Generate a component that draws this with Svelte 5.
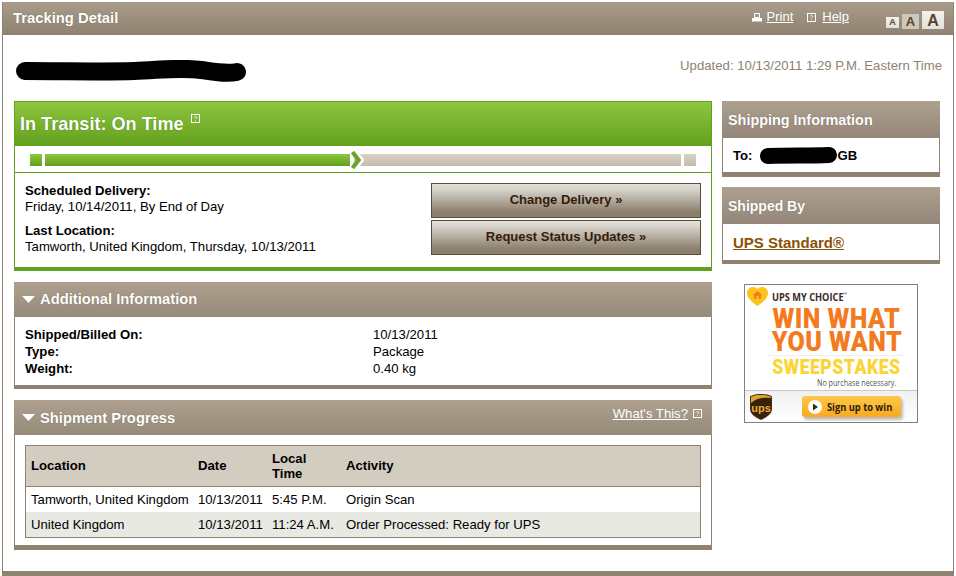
<script>
  const additional = [
    ['Shipped/Billed On:', '10/13/2011'],
    ['Type:', 'Package'],
    ['Weight:', '0.40 kg']
  ];
  const progress = [
    ['Tamworth, United Kingdom', '10/13/2011', '5:45 P.M.', 'Origin Scan'],
    ['United Kingdom', '10/13/2011', '11:24 A.M.', 'Order Processed: Ready for UPS']
  ];
</script>

{#snippet help()}
  <svg class="help" width="9" height="9" viewBox="0 0 9 9"><rect x=".5" y=".5" width="8" height="8" fill="none" stroke="currentColor"/><path d="M3.200 3.400c0-1 2.600-1.200 2.600.1 0 .8-1.300.8-1.300 1.600M4.500 6v.9" fill="none" stroke="currentColor" stroke-width=".8"/></svg>
{/snippet}

{#snippet arrow()}
  <svg class="tri" width="13" height="7" viewBox="0 0 13 7"><path d="M0 0h13L6.500 7z" fill="#fff"/></svg>
{/snippet}

<div class="page">
  <header class="top">
    <h1>Tracking Detail</h1>
    <div class="tools">
      <svg class="printer" width="10" height="9" viewBox="0 0 10 9"><path d="M2.500 .5h5v4h-5z" fill="#a89b89" stroke="#fff"/><path d="M0 5h10v3.500H0z" fill="#fff"/></svg>
      <a class="tool" href="#p">Print</a>
      <span class="helpwrap">{@render help()}</span>
      <a class="tool" href="#h">Help</a>
      <div class="sizes">
        <span class="s1">A</span><span class="s2">A</span><span class="s3">A</span>
      </div>
    </div>
  </header>

  <div class="intro">
    <svg class="scribble" width="230" height="24" viewBox="0 0 230 24"><path d="M9 11 C50 11 90 12 118 11 C145 10 165 7 185 10 C200 12 210 14 221 12" fill="none" stroke="#000" stroke-width="18" stroke-linecap="round"/></svg>
    <p class="updated">Updated: 10/13/2011 1:29 P.M. Eastern Time</p>
  </div>

  <div class="columns">
    <main class="left">
      <section class="status">
        <div class="status-head"><h2>In Transit: On Time</h2><span class="status-help">{@render help()}</span></div>
        <div class="track">
          <span class="seg green g1"></span>
          <span class="seg green g2"></span>
          <svg class="chev" width="14" height="18" viewBox="0 0 14 18"><path d="M6.500 .8 13 9l-6.500 8.200" fill="none" stroke="#fff" stroke-width="2.400"/><path d="M2.500 1 8.500 9l-6 8" fill="none" stroke="#6aa526" stroke-width="4"/></svg>
          <span class="seg tan t1"></span>
          <span class="seg tan t2"></span>
        </div>
        <div class="status-body">
          <div class="facts">
            <h3>Scheduled Delivery:</h3>
            <p>Friday, 10/14/2011, By End of Day</p>
            <h3 class="second">Last Location:</h3>
            <p>Tamworth, United Kingdom, Thursday, 10/13/2011</p>
          </div>
          <div class="actions">
            <button>Change Delivery »</button>
            <button>Request Status Updates »</button>
          </div>
        </div>
      </section>

      <section class="panel add">
        <div class="bar">{@render arrow()}<h2>Additional Information</h2></div>
        <dl>
          {#each additional as [k, v]}
            <dt>{k}</dt><dd>{v}</dd>
          {/each}
        </dl>
      </section>

      <section class="panel ship">
        <div class="bar">{@render arrow()}<h2>Shipment Progress</h2>
          <span class="whats"><a href="#w">What's This?</a>{@render help()}</span>
        </div>
        <div class="table-wrap">
          <table>
            <thead>
              <tr><th class="c1">Location</th><th class="c2">Date</th><th class="c3">Local<br />Time</th><th>Activity</th></tr>
            </thead>
            <tbody>
              {#each progress as row}
                <tr>{#each row as cell}<td>{cell}</td>{/each}</tr>
              {/each}
            </tbody>
          </table>
        </div>
      </section>
    </main>

    <aside class="right">
      <section class="side first">
        <h2>Shipping Information</h2>
        <div class="side-body to">
          <b>To:</b>
          <svg class="blot" width="79" height="19" viewBox="0 0 79 19"><path d="M9 10C30 9 50 10 70 9" fill="none" stroke="#000" stroke-width="16" stroke-linecap="round"/></svg>
          <b>GB</b>
        </div>
      </section>
      <section class="side second-box">
        <h2>Shipped By</h2>
        <div class="side-body by"><a href="#u">UPS Standard®</a></div>
      </section>

      <div class="ad">
        <div class="ad-top">
          <svg class="heart" width="21" height="19" viewBox="0 0 21 19"><path d="M10.500 19C5 15 0 11.500 0 6 0 2.500 2.700 0 6 0c1.900 0 3.500.9 4.500 2.300C11.500.9 13.100 0 15 0c3.300 0 6 2.500 6 6 0 5.500-5 9-10.500 13z" fill="#fcc419"/><path d="M10.500 4 6 8h1v4h7V8h1z" fill="#f47a20"/><path d="M9.300 9h2.400v3H9.300z" fill="#fcc419"/></svg>
          <span>UPS MY CHOICE<sup>℠</sup></span>
        </div>
        <div class="win"><span>WIN WHAT</span></div>
        <div class="win two"><span>YOU WANT</span></div>
        <div class="sweep"><span>SWEEPSTAKES</span></div>
        <div class="nopurchase"><span>No purchase necessary.</span></div>
        <div class="ad-foot">
          <svg class="shield" width="22" height="26" viewBox="0 0 22 26"><path d="M11 0C7 0 3 .6 0 2.300V15c0 5 5.500 8.500 11 11 5.500-2.500 11-6 11-11V2.300C19 .6 15 0 11 0z" fill="#4a2d0c"/><path d="M21 3.500C14 2.500 6 4 1 8.500V15c0 4.500 5 7.500 10 10 5-2.500 10-5.500 10-10z" fill="#3a2208"/><path d="M1 2.800C4 1.300 7.500 1 11 1s7 .3 10 1.800v1.200C14 3 6 4.500 1 9z" fill="#d9a437"/><text x="11" y="18" text-anchor="middle" class="ups">ups</text></svg>
          <div class="cta">
            <svg width="14" height="14" viewBox="0 0 14 14"><circle cx="7" cy="7" r="7" fill="#fff"/><path d="M5 3.500 10 7l-5 3.500z" fill="#3a2a10"/></svg>
            <span>Sign up to win</span>
          </div>
        </div>
      </div>
    </aside>
  </div>

  <div class="foot"></div>
</div>

<style>
  :global(body) { margin: 0; background: #fff; }
  .page {
    height: 574px;
    box-sizing: border-box;
    width: 952px;
    margin: 2px 0 0 2px;
    border-left: 1px solid #8f8270;
    border-right: 1px solid #8f8270;
    display: flex;
    flex-direction: column;
    font: 13.15px/17px "Liberation Sans", Arial, sans-serif;
    color: #000;
    overflow: hidden;
  }
  h1, h2, h3, p, dl, dd { margin: 0; }

  .top {
    height: 33px;
    flex: none;
    margin: 0 -1px;
    background: linear-gradient(#a99c8a, #8f8270);
    display: flex;
    align-items: center;
    justify-content: space-between;
    padding: 0 10px 0 11px;
    color: #fff;
  }
  h1 { font-size: 14.8px; font-weight: bold; text-shadow: 0 0 1px #6b6050; }
  .tools { display: flex; align-items: center; color: #fff; }
  .printer { margin-right: 5px; margin-top: -3px; }
  .tool { color: #fff; font-size: 13px; margin-top: -4px; }
  .helpwrap { display: flex; margin: -3px 6px 0 14px; }
  .help { display: block; flex: none; }
  .sizes { display: flex; align-items: flex-end; margin: 0 0 -3px 37px; gap: 3px; }
  .sizes span {
    background: linear-gradient(#f3f2ed, #e3e0d8);
    color: #54442e;
    font-weight: bold;
    display: flex;
    align-items: center;
    justify-content: center;
  }
  .s1 { width: 13px; height: 11px; font-size: 9px; margin-bottom: 1px; }
  .s2 { width: 17px; height: 15px; font-size: 13px; background: #cfc7ba !important; }
  .s3 { width: 22px; height: 18px; font-size: 16px; }

  .intro {
    height: 66px;
    flex: none;
    display: flex;
    justify-content: space-between;
    padding: 0 11px 0 13px;
  }
  .scribble { margin-top: 25px; }
  .updated { color: #8f8270; margin-top: 22px; font-size: 13.2px; }

  .columns { display: flex; flex: 1; padding-left: 11px; gap: 10px; }
  .left { width: 698px; flex: none; }
  .right { width: 218px; flex: none; }

  .status {
    box-sizing: border-box;
    height: 170px;
    border: 1px solid #63a01f;
    border-bottom: 4px solid #63a01f;
  }
  .status-head {
    height: 44px;
    background: linear-gradient(#8dc63f, #62a01e);
    display: flex;
    padding-left: 5px;
    box-sizing: border-box;
    color: #fff;
  }
  .status-head h2 { font-size: 18.1px; line-height: 44px; font-weight: bold; text-shadow: 0 0 1px #44700f; }
  .status-help { margin: 12px 0 0 7px; }
  .track {
    height: 27px;
    box-sizing: border-box;
    border-bottom: 1px solid #63a01f;
    padding: 8px 15px 0 15px;
    display: flex;
    align-items: flex-start;
  }
  .seg { height: 12px; display: block; }
  .green { background: linear-gradient(#8dc63f, #62a01e); }
  .tan { background: linear-gradient(#d8d1c6, #c5bcad); }
  .g1 { width: 12px; margin-right: 3px; }
  .g2 { width: 305px; }
  .chev { margin: -3px -10px 0 0; flex: none; position: relative; z-index: 1; }
  .t1 { width: 327px; }
  .t2 { width: 12px; margin-left: 3px; }
  .status-body { display: flex; justify-content: space-between; padding: 10px 10px 0 10px; }
  .facts h3 { font-size: 13.15px; font-weight: bold; line-height: 16px; }
  .facts p { line-height: 16px; }
  .facts .second { margin-top: 8px; }
  .actions { display: flex; flex-direction: column; gap: 2px; }
  button {
    width: 270px;
    height: 35px;
    padding: 0 0 2px;
    border: 1px solid #5c4d38;
    background: linear-gradient(#e2e0da 0, #d8d5cd 15%, #8c7f6d 85%, #8c7f6d 100%);
    color: #351c0a;
    font: bold 13px "Liberation Sans", Arial, sans-serif;
  }

  .panel {
    margin-top: 11px;
    box-sizing: border-box;
    border: 1px solid #8f8270;
    border-top: 0;
    border-bottom: 4px solid #8f8270;
  }
  .add { height: 107px; }
  .ship { height: 150px; border-bottom-width: 5px; }
  .bar {
    height: 35px;
    margin: 0 -1px;
    background: linear-gradient(#ada08e, #968a78);
    display: flex;
    align-items: center;
    padding: 0 10px 0 8px;
    color: #fff;
  }
  .tri { margin-right: 5px; }
  .bar h2 { font-size: 14.75px; font-weight: bold; text-shadow: 0 0 1px #6b6050; flex: 1; }
  .ship .bar h2 { padding-top: 2px; }
  .whats { display: flex; align-items: center; gap: 5px; margin-top: -9px; }
  .whats a { color: #fff; }
  dl {
    display: grid;
    grid-template-columns: 348px 1fr;
    padding: 9px 10px 0;
    line-height: 17px;
  }
  dt { font-weight: bold; }

  .table-wrap { padding: 10px 10px 0; }
  table {
    width: 100%;
    border-collapse: collapse;
    border: 1px solid #8f8270;
    table-layout: fixed;
  }
  th {
    background: #d3ccc0;
    border-bottom: 1px solid #8f8270;
    text-align: left;
    padding: 0 5px 1px;
    height: 39px;
    box-sizing: content-box;
    font-size: 13.15px;
    line-height: 15px;
  }
  td { padding: 0 5px 1px; height: 24px; box-sizing: content-box; white-space: nowrap; }
  .c1 { width: 157px; }
  .c2 { width: 64px; }
  .c3 { width: 64px; }
  tbody tr:nth-child(2) td { background: #e9e9e3; }

  .side {
    box-sizing: border-box;
    margin-top: 10px;
    border: 1px solid #8f8270;
    border-top: 0;
    border-bottom: 5px solid #8f8270;
    height: 77px;
  }
  .side.first { margin-top: 0; height: 76px; }
  .second-box { border-bottom-width: 4px; }
  .side h2 {
    height: 37px;
    line-height: 39px;
    margin: 0 -1px;
    padding-left: 6px;
    background: linear-gradient(#ada08e, #94877a);
    color: #fff;
    font-size: 14px;
    font-weight: bold;
    text-shadow: 0 0 1px #6b6050;
  }
  .first h2 { font-size: 14.4px; }
  .side-body { box-sizing: border-box; height: 34px; display: flex; align-items: center; padding-left: 10px; }
  .to b { font-size: 13.15px; }
  .blot { margin: 0 -1px 0 7px; }
  .by { padding-top: 2px; }
  .by a { color: #8a5208; font-size: 15px; font-weight: bold; }

  .ad {
    box-sizing: border-box;
    width: 174px;
    height: 139px;
    margin: 20px 0 0 22px;
    border: 1px solid #808080;
    display: flex;
    flex-direction: column;
    font-family: "Noto Sans", sans-serif;
    overflow: hidden;
  }
  .ad-top { height: 22px; flex: none; display: flex; align-items: flex-start; padding: 2px 0 0 2px; box-sizing: border-box; gap: 4px; }
  .heart { flex: none; }
  .ad-top span { font: bold 11px/14px "Open Sans", sans-serif; color: #3a2a1e; transform: scaleX(.84); transform-origin: left; white-space: nowrap; margin-top: 3px; }
  .ad-top sup { font-size: 5px; vertical-align: 5px; line-height: 0; }
  .win { height: 24px; flex: none; display: flex; justify-content: center; overflow: visible; padding-left: 11px; }
  .win span {
    font: 900 28px/24px "Roboto", sans-serif;
    color: #f47a20;
    white-space: nowrap;
    transform: scaleX(.895);
    letter-spacing: .5px;
  }
  .win.two { margin-top: -1px; }
  .sweep {
    margin: 1px 12px 0 22px;
    border-top: 1px solid #f0eeea;
    height: 22px;
    flex: none;
    display: flex;
    justify-content: center;
  }
  .sweep span {
    font: 900 20px/22px "Roboto", sans-serif;
    color: #fbd536;
    white-space: nowrap;
    transform: scaleX(.885);
    letter-spacing: .5px;
  }
  .nopurchase { font: 8.5px/10px "Open Sans", sans-serif; color: #555; text-align: right; padding-right: 21px; flex: none; }
  .nopurchase span { display: inline-block; white-space: nowrap; transform: scaleX(.84); transform-origin: right; }
  .ad-foot {
    flex: 1;
    margin-top: 2px;
    border-top: 1px solid #c8c8c8;
    background: linear-gradient(#f1f1f1, #fff);
    display: flex;
    align-items: center;
    padding-left: 5px;
    gap: 30px;
  }
  .shield { flex: none; }
  .ups { font: bold 11px "Liberation Sans", sans-serif; fill: #e8b040; }
  .cta {
    width: 99px;
    height: 21px;
    flex: none;
    border-radius: 3px;
    background: linear-gradient(#fdc84a, #f9a91e);
    box-shadow: 2px 3px 3px #bbb;
    display: flex;
    align-items: center;
    padding-left: 6px;
    box-sizing: border-box;
    gap: 5px;
    font: bold 10px "Open Sans", sans-serif;
    color: #2a1c08;
  }
  .cta svg { flex: none; }
  .cta span { white-space: nowrap; transform: scaleX(.93); transform-origin: left; }

  .foot { height: 5px; flex: none; background: #8f8270; margin: 0 -1px; }
</style>
